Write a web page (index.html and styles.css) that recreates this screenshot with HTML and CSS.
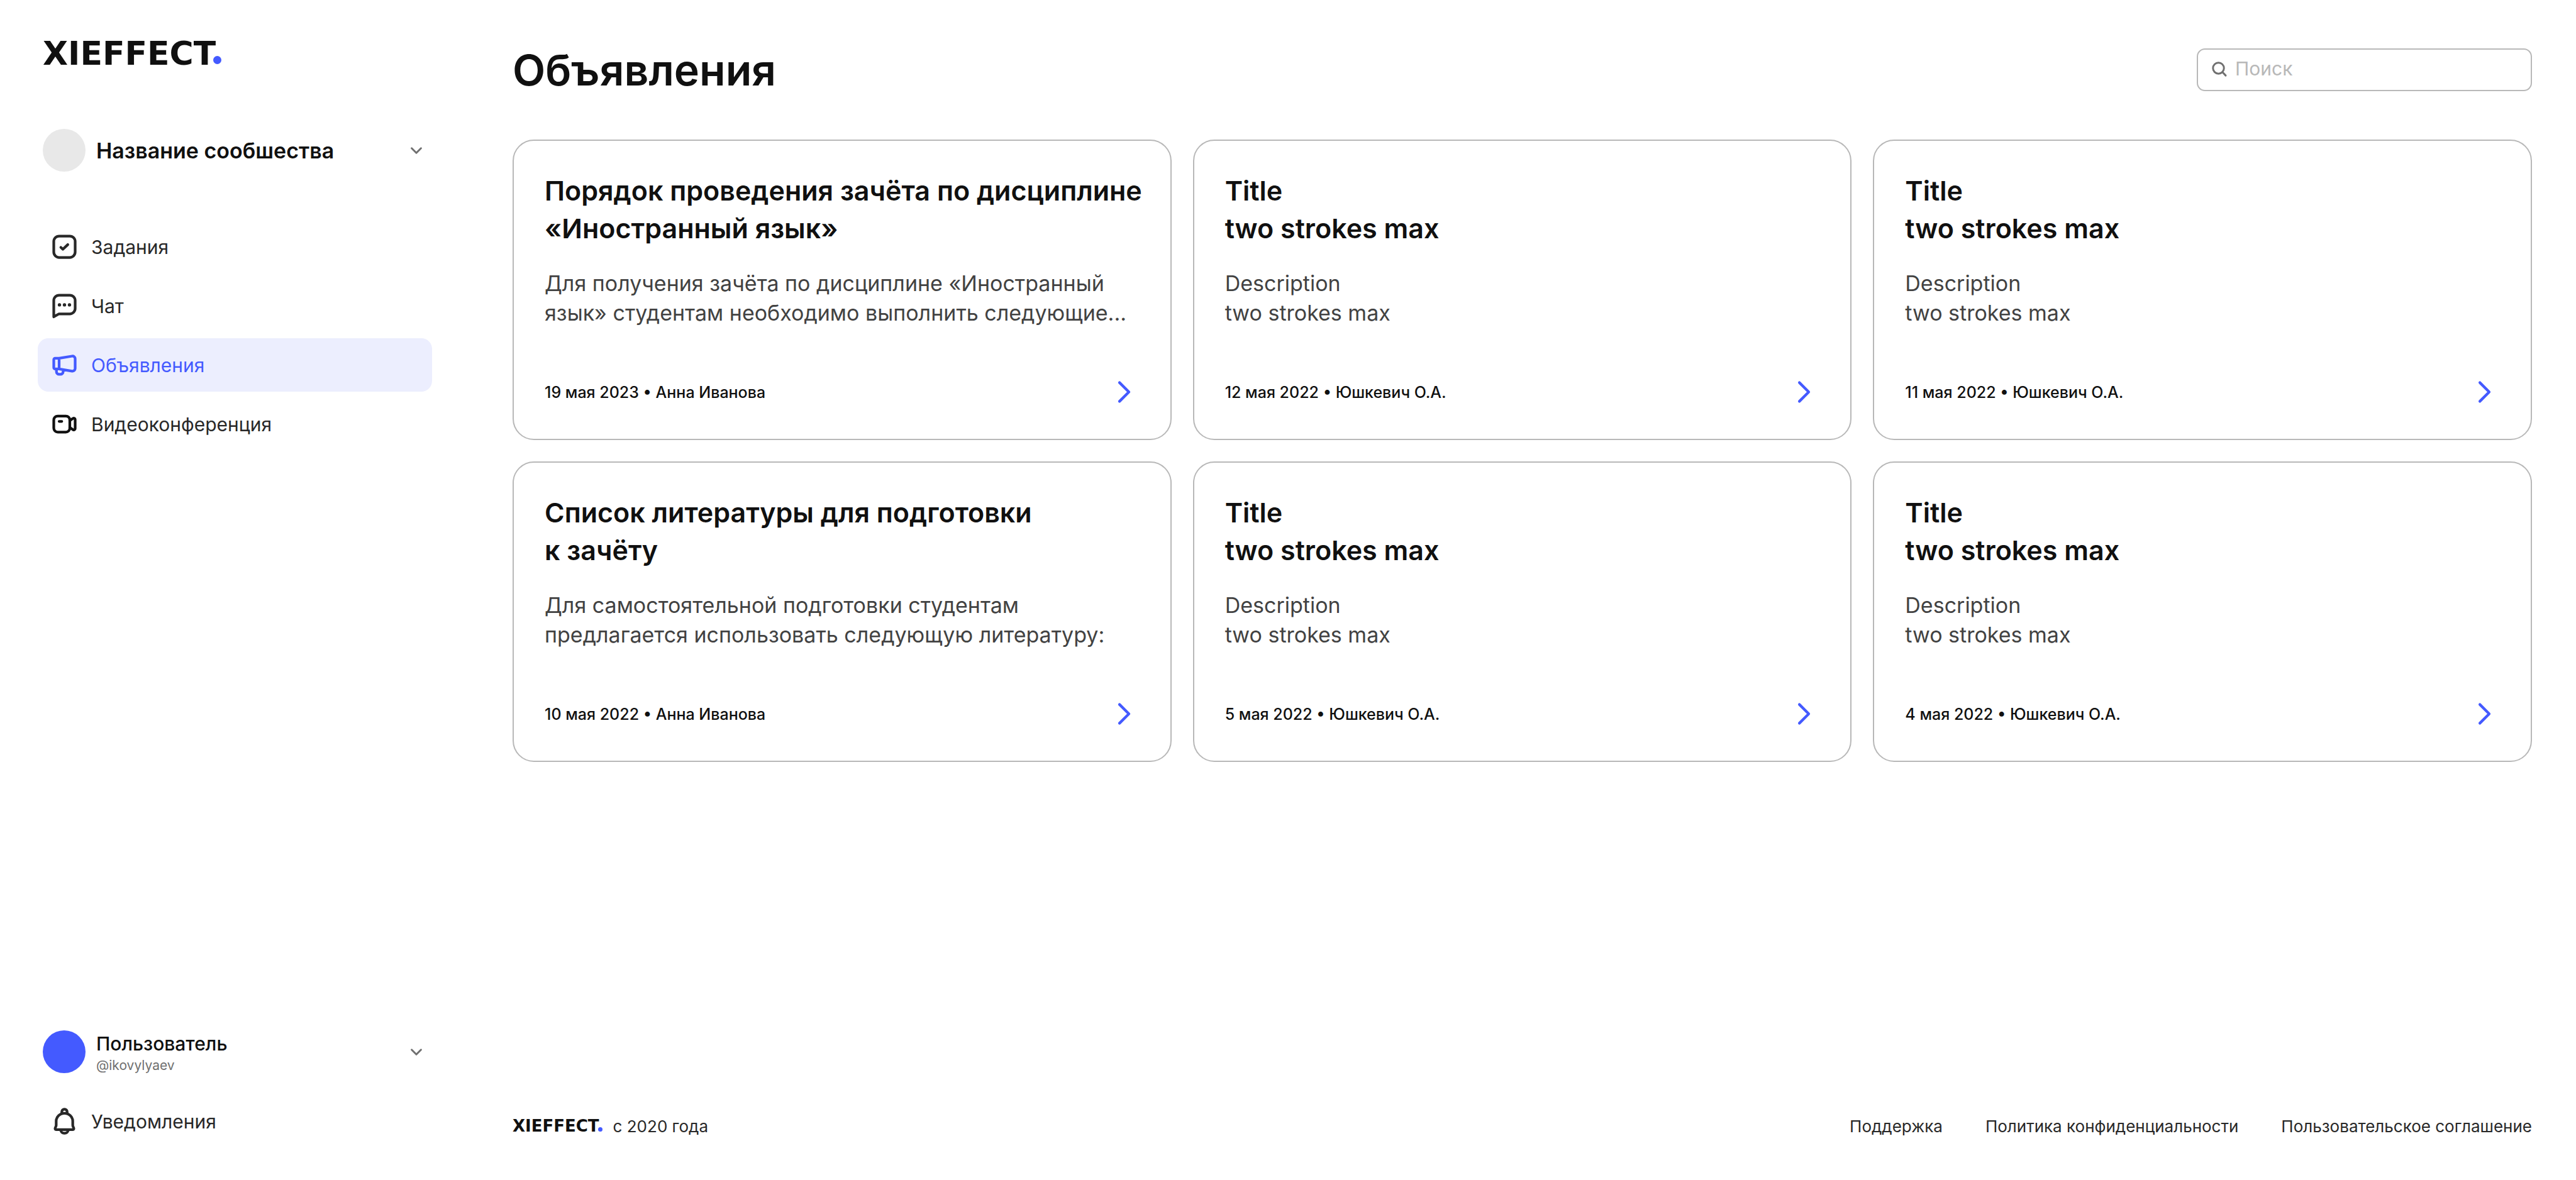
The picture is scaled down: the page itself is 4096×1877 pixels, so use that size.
FILE: index.html
```html
<!DOCTYPE html>
<html lang="ru">
<head>
<meta charset="utf-8">
<meta name="viewport" content="width=device-width, initial-scale=1">
<title>Объявления — XIEFFECT</title>
<link rel="stylesheet" href="styles.css">
</head>
<body>
<div class="app">
  <aside class="sidebar">
    <a class="logo" href="#">XIEFFECT<span class="logo-dot"></span></a>

    <button class="switcher community" type="button">
      <span class="avatar"></span>
      <span class="community-name">Название сообшества</span>
      <svg class="chevron" viewBox="0 0 16 16"><path d="M4.500 6.500L8 10l3.500-3.500"/></svg>
    </button>

    <nav class="menu">
      <a class="menu-item" href="#">
        <svg class="icon" viewBox="0 0 24 24"><rect x="4" y="4" width="16" height="16" rx="4"/><path d="M9.3 12.5l1.5 1.4 3.7-3.5"/></svg>
        Задания
      </a>
      <a class="menu-item" href="#">
        <svg class="icon" viewBox="0 0 24 24"><path d="M4 20.2V8a4 4 0 0 1 4-4h8a4 4 0 0 1 4 4v6a4 4 0 0 1-4 4H7.9z"/><g class="solid"><circle cx="8.25" cy="11.25" r="1.25"/><circle cx="12" cy="11.25" r="1.25"/><circle cx="15.75" cy="11.25" r="1.25"/></g></svg>
        Чат
      </a>
      <a class="menu-item active" href="#" aria-current="page">
        <svg class="icon" viewBox="0 0 24 24"><path d="M8 7H5a1 1 0 0 0-1 1v6a1 1 0 0 0 1 1h3zM8 7l9.7-1.6A2 2 0 0 1 20 7.3v7.4a2 2 0 0 1-2.3 1.9L8 15M6 15v2a2 2 0 0 0 2 2h1a2 2 0 0 0 2-2v-1.4"/></svg>
        Объявления
      </a>
      <a class="menu-item" href="#">
        <svg class="icon dark" viewBox="0 0 24 24"><rect x="4" y="6" width="12" height="12" rx="3"/><path d="M8 10h2M16 9.4l2.4-1.6a1 1 0 0 1 1.6.8v6.8a1 1 0 0 1-1.6.8L16 14.6"/></svg>
        Видеоконференция
      </a>
    </nav>

    <div class="account">
      <button class="switcher" type="button">
        <span class="avatar user-avatar"></span>
        <span class="user">
          <span class="user-name">Пользователь</span>
          <span class="user-handle">@ikovylyaev</span>
        </span>
        <svg class="chevron" viewBox="0 0 16 16"><path d="M4.500 6.500L8 10l3.500-3.500"/></svg>
      </button>
      <a class="menu-item" href="#">
        <svg class="icon" viewBox="0 0 24 24"><path d="M10 6V5a2 2 0 0 1 4 0v1M5.800 12a6.200 6 0 0 1 12.400 0v3c0 1 .8 1.700.8 2.500a.8.8 0 0 1-.8.8H5.800a.8.8 0 0 1-.8-.8c0-.8.8-1.500.8-2.500zM9.200 18.500a2.800 2.500 0 0 0 5.600 0"/></svg>
        Уведомления
      </a>
    </div>
  </aside>

  <main class="main">
    <header class="header">
      <h1 class="page-title">Объявления</h1>
      <label class="search">
        <svg class="search-icon" viewBox="0 0 16 16"><circle cx="7.3" cy="6.8" r="4.1"/><path d="M10.300 9.800l2.400 2.500"/></svg>
        <input class="search-input" type="text" placeholder="Поиск" aria-label="Поиск">
      </label>
    </header>

    <section class="cards">
      <article class="card">
        <h2 class="card-title">Порядок проведения зачёта по дисциплине<br>«Иностранный язык»</h2>
        <p class="card-text">Для получения зачёта по дисциплине «Иностранный<br>язык» студентам необходимо выполнить следующие...</p>
        <div class="card-footer"><span>19 мая 2023 • Анна Иванова</span><a class="card-link" href="#" aria-label="Открыть"><svg class="arrow" viewBox="0 0 24 24"><path d="M9 5l7 7-7 7"/></svg></a></div>
      </article>
      <article class="card">
        <h2 class="card-title">Title<br>two strokes max</h2>
        <p class="card-text">Description<br>two strokes max</p>
        <div class="card-footer"><span>12 мая 2022 • Юшкевич О.А.</span><a class="card-link" href="#" aria-label="Открыть"><svg class="arrow" viewBox="0 0 24 24"><path d="M9 5l7 7-7 7"/></svg></a></div>
      </article>
      <article class="card">
        <h2 class="card-title">Title<br>two strokes max</h2>
        <p class="card-text">Description<br>two strokes max</p>
        <div class="card-footer"><span>11 мая 2022 • Юшкевич О.А.</span><a class="card-link" href="#" aria-label="Открыть"><svg class="arrow" viewBox="0 0 24 24"><path d="M9 5l7 7-7 7"/></svg></a></div>
      </article>
      <article class="card">
        <h2 class="card-title">Список литературы для подготовки<br>к зачёту</h2>
        <p class="card-text">Для самостоятельной подготовки студентам<br>предлагается использовать следующую литературу:</p>
        <div class="card-footer"><span>10 мая 2022 • Анна Иванова</span><a class="card-link" href="#" aria-label="Открыть"><svg class="arrow" viewBox="0 0 24 24"><path d="M9 5l7 7-7 7"/></svg></a></div>
      </article>
      <article class="card">
        <h2 class="card-title">Title<br>two strokes max</h2>
        <p class="card-text">Description<br>two strokes max</p>
        <div class="card-footer"><span>5 мая 2022 • Юшкевич О.А.</span><a class="card-link" href="#" aria-label="Открыть"><svg class="arrow" viewBox="0 0 24 24"><path d="M9 5l7 7-7 7"/></svg></a></div>
      </article>
      <article class="card">
        <h2 class="card-title">Title<br>two strokes max</h2>
        <p class="card-text">Description<br>two strokes max</p>
        <div class="card-footer"><span>4 мая 2022 • Юшкевич О.А.</span><a class="card-link" href="#" aria-label="Открыть"><svg class="arrow" viewBox="0 0 24 24"><path d="M9 5l7 7-7 7"/></svg></a></div>
      </article>
    </section>

    <footer class="footer">
      <div class="copyright"><span class="logo logo-small">XIEFFECT<span class="logo-dot"></span></span><span>с 2020 года</span></div>
      <nav class="footer-links">
        <a href="#">Поддержка</a>
        <a href="#">Политика конфиденциальности</a>
        <a href="#">Пользовательское соглашение</a>
      </nav>
    </footer>
  </main>
</div>
</body>
</html>
```
FILE: styles.css
```css
:root {
  --ink: #101010;
  --text: #282828;
  --text-soft: #424242;
  --muted: #707070;
  --line: #b8b8b8;
  --accent: #445aff;
  --accent-soft: #eceefe;
}

* {
  box-sizing: border-box;
}

body {
  margin: 0;
  background: #fff;
  color: var(--text);
  font-family: Inter, "Liberation Sans", sans-serif;
  font-size: 30px;
}

a {
  color: inherit;
  text-decoration: none;
}

svg {
  flex: none;
  fill: none;
  stroke: currentColor;
  stroke-linecap: round;
  stroke-linejoin: round;
}

.app {
  display: flex;
  min-height: 100vh;
}

/* Sidebar */

.sidebar {
  display: flex;
  flex: none;
  flex-direction: column;
  width: 747px;
  padding: 68px 60px 51px;
}

.logo {
  display: flex;
  align-items: flex-end;
  height: 34px;
  padding-left: 8px;
  color: var(--ink);
  font-family: "DejaVu Sans", sans-serif;
  font-size: 52px;
  font-weight: 700;
  line-height: 34px;
}

.logo-dot {
  width: 13px;
  height: 13px;
  margin-left: -4px;
  border-radius: 50%;
  background: var(--accent);
}

.switcher {
  display: flex;
  align-items: center;
  gap: 17px;
  height: 68px;
  padding: 0 8px;
  border: 0;
  background: none;
  color: var(--ink);
  font: inherit;
  text-align: left;
}

.community {
  margin-top: 103px;
}

.avatar {
  flex: none;
  width: 68px;
  height: 68px;
  border-radius: 50%;
  background: #e8e8e8;
}

.user-avatar {
  background: var(--accent);
}

.community-name {
  font-size: 34px;
  font-weight: 600;
}

.chevron {
  width: 34px;
  height: 34px;
  margin-left: auto;
  color: var(--muted);
  stroke-width: 1.4;
}

.menu {
  display: flex;
  flex-direction: column;
  gap: 9px;
  margin-top: 77px;
}

.menu-item {
  display: flex;
  align-items: center;
  gap: 17px;
  height: 85px;
  padding: 0 17px;
  border-radius: 17px;
}

.menu-item.active {
  background: var(--accent-soft);
  color: var(--accent);
}

.icon {
  width: 51px;
  height: 51px;
  stroke-width: 2;
}

.icon.dark {
  color: var(--ink);
}

.solid {
  fill: currentColor;
  stroke: none;
}

.account {
  display: flex;
  flex-direction: column;
  gap: 34px;
  margin-top: auto;
}

.user {
  display: flex;
  flex-direction: column;
}

.user-name {
  font-weight: 500;
  line-height: 43px;
}

.user-handle {
  color: var(--muted);
  font-size: 21px;
  line-height: 25px;
}

/* Main column */

.main {
  display: flex;
  flex: 1;
  flex-direction: column;
  min-width: 0;
  padding: 77px 70px 60px 68px;
}

.header {
  display: flex;
  align-items: center;
  justify-content: space-between;
}

.page-title {
  margin: 0;
  color: var(--ink);
  font-size: 68px;
  font-weight: 600;
  line-height: 68px;
}

.search {
  display: flex;
  align-items: center;
  gap: 8px;
  width: 533px;
  height: 68px;
  padding: 0 17px;
  border: 2px solid var(--line);
  border-radius: 13px;
}

.search-icon {
  width: 34px;
  height: 34px;
  color: var(--muted);
  stroke-width: 1.4;
}

.search-input {
  flex: 1;
  min-width: 0;
  padding: 0 0 4px;
  border: 0;
  outline: 0;
  background: none;
  color: var(--text);
  font: inherit;
}

.search-input::placeholder {
  color: var(--line);
  opacity: 1;
}

.cards {
  display: grid;
  grid-template-columns: repeat(3, minmax(0, 1fr));
  gap: 34px;
  margin-top: 77px;
}

.card {
  padding: 49px;
  border: 2px solid var(--line);
  border-radius: 34px;
}

.card-title {
  margin: 0;
  color: var(--ink);
  font-size: 43px;
  font-weight: 600;
  line-height: 60px;
  white-space: nowrap;
}

.card-text {
  margin: 34px 0 77px;
  color: var(--text-soft);
  font-size: 34px;
  line-height: 47px;
}

.card-footer {
  display: flex;
  align-items: center;
  justify-content: space-between;
  color: var(--ink);
  font-size: 25px;
  font-weight: 500;
}

.card-link {
  display: flex;
  color: var(--accent);
}

.arrow {
  width: 51px;
  height: 51px;
  stroke-width: 2;
}

.footer {
  display: flex;
  align-items: center;
  justify-content: space-between;
  margin-top: auto;
  font-size: 26px;
  line-height: 51px;
}

.copyright {
  display: flex;
  align-items: center;
  gap: 17px;
}

.logo-small {
  height: 17px;
  padding-left: 0;
  font-size: 26px;
  line-height: 17px;
}

.logo-small .logo-dot {
  width: 7px;
  height: 7px;
  margin-left: -2px;
}

.footer-links {
  display: flex;
  gap: 68px;
}
```
